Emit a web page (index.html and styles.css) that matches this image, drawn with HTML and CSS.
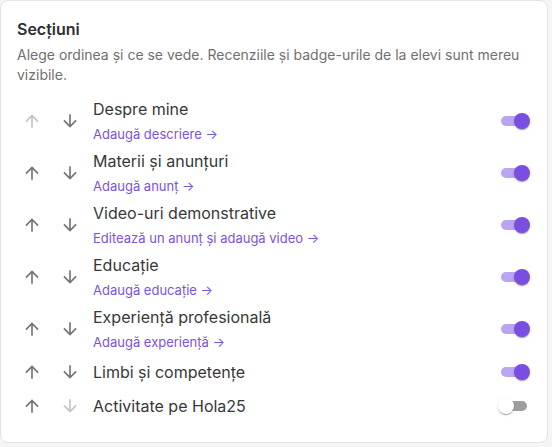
FILE: index.html
```html
<!DOCTYPE html>
<html lang="ro">
<head>
<meta charset="utf-8">
<title>Secțiuni</title>
<link rel="stylesheet" href="styles.css">
</head>
<body>
<div class="card">
  <h2 class="card-title">Secțiuni</h2>
  <p class="card-desc">Alege ordinea și ce se vede. Recenziile și badge-urile de la elevi sunt mereu vizibile.</p>

  <ul class="sections">
    <li class="section">
      <div class="moves">
        <button class="move" disabled><svg viewBox="0 0 24 24"><path d="M4 12l1.41 1.41L11 7.83V20h2V7.83l5.58 5.59L20 12l-8-8-8 8z"/></svg></button>
        <button class="move"><svg viewBox="0 0 24 24"><path d="M20 12l-1.41-1.41L13 16.17V4h-2v12.17l-5.58-5.59L4 12l8 8 8-8z"/></svg></button>
      </div>
      <div class="section-text">
        <div class="section-name">Despre mine</div>
        <a class="section-link" href="#">Adaugă descriere →</a>
      </div>
      <span class="switch on"><span class="track"></span><span class="thumb"></span></span>
    </li>
    <li class="section">
      <div class="moves">
        <button class="move"><svg viewBox="0 0 24 24"><path d="M4 12l1.41 1.41L11 7.83V20h2V7.83l5.58 5.59L20 12l-8-8-8 8z"/></svg></button>
        <button class="move"><svg viewBox="0 0 24 24"><path d="M20 12l-1.41-1.41L13 16.17V4h-2v12.17l-5.58-5.59L4 12l8 8 8-8z"/></svg></button>
      </div>
      <div class="section-text">
        <div class="section-name">Materii și anunțuri</div>
        <a class="section-link" href="#">Adaugă anunț →</a>
      </div>
      <span class="switch on"><span class="track"></span><span class="thumb"></span></span>
    </li>
    <li class="section">
      <div class="moves">
        <button class="move"><svg viewBox="0 0 24 24"><path d="M4 12l1.41 1.41L11 7.83V20h2V7.83l5.58 5.59L20 12l-8-8-8 8z"/></svg></button>
        <button class="move"><svg viewBox="0 0 24 24"><path d="M20 12l-1.41-1.41L13 16.17V4h-2v12.17l-5.58-5.59L4 12l8 8 8-8z"/></svg></button>
      </div>
      <div class="section-text">
        <div class="section-name">Video-uri demonstrative</div>
        <a class="section-link" href="#">Editează un anunț și adaugă video →</a>
      </div>
      <span class="switch on"><span class="track"></span><span class="thumb"></span></span>
    </li>
    <li class="section">
      <div class="moves">
        <button class="move"><svg viewBox="0 0 24 24"><path d="M4 12l1.41 1.41L11 7.83V20h2V7.83l5.58 5.59L20 12l-8-8-8 8z"/></svg></button>
        <button class="move"><svg viewBox="0 0 24 24"><path d="M20 12l-1.41-1.41L13 16.17V4h-2v12.17l-5.58-5.59L4 12l8 8 8-8z"/></svg></button>
      </div>
      <div class="section-text">
        <div class="section-name">Educație</div>
        <a class="section-link" href="#">Adaugă educație →</a>
      </div>
      <span class="switch on"><span class="track"></span><span class="thumb"></span></span>
    </li>
    <li class="section">
      <div class="moves">
        <button class="move"><svg viewBox="0 0 24 24"><path d="M4 12l1.41 1.41L11 7.83V20h2V7.83l5.58 5.59L20 12l-8-8-8 8z"/></svg></button>
        <button class="move"><svg viewBox="0 0 24 24"><path d="M20 12l-1.41-1.41L13 16.17V4h-2v12.17l-5.58-5.59L4 12l8 8 8-8z"/></svg></button>
      </div>
      <div class="section-text">
        <div class="section-name">Experiență profesională</div>
        <a class="section-link" href="#">Adaugă experiență →</a>
      </div>
      <span class="switch on"><span class="track"></span><span class="thumb"></span></span>
    </li>
    <li class="section">
      <div class="moves">
        <button class="move"><svg viewBox="0 0 24 24"><path d="M4 12l1.41 1.41L11 7.83V20h2V7.83l5.58 5.59L20 12l-8-8-8 8z"/></svg></button>
        <button class="move"><svg viewBox="0 0 24 24"><path d="M20 12l-1.41-1.41L13 16.17V4h-2v12.17l-5.58-5.59L4 12l8 8 8-8z"/></svg></button>
      </div>
      <div class="section-text">
        <div class="section-name">Limbi și competențe</div>
      </div>
      <span class="switch on"><span class="track"></span><span class="thumb"></span></span>
    </li>
    <li class="section">
      <div class="moves">
        <button class="move"><svg viewBox="0 0 24 24"><path d="M4 12l1.41 1.41L11 7.83V20h2V7.83l5.58 5.59L20 12l-8-8-8 8z"/></svg></button>
        <button class="move" disabled><svg viewBox="0 0 24 24"><path d="M20 12l-1.41-1.41L13 16.17V4h-2v12.17l-5.58-5.59L4 12l8 8 8-8z"/></svg></button>
      </div>
      <div class="section-text">
        <div class="section-name">Activitate pe Hola25</div>
      </div>
      <span class="switch"><span class="track"></span><span class="thumb"></span></span>
    </li>
  </ul>
</div>
</body>
</html>
```

FILE: styles.css
```css
/* Sections settings card */

body
{ margin: 0;
padding: 1px;
background-color: #f5f5f5;
font-family: Inter, "Noto Sans", sans-serif;
}

div.card
{ width: 548px;
height: 443px;
box-sizing: border-box;
background-color: #fff;
border: 1px solid #e4e4e7;
border-radius: 8px;
padding: 16px 13px 16px 16px;
margin: -1px 0 0 -1px;
}

h2.card-title
{ margin: 0 0 4px 0;
font-size: 16px;
line-height: 24px;
font-weight: 600;
color: #2e2e33;
}

p.card-desc
{ margin: 0 3px 10px 0;
font-size: 14px;
line-height: 20px;
color: #707070;
}

ul.sections
{ list-style: none;
margin: 0;
padding: 0;
}

li.section
{ display: flex;
align-items: center;
gap: 8px;
padding: 2px 0;
}

div.moves
{ display: flex;
gap: 8px;
}

button.move
{ width: 30px;
height: 30px;
padding: 5px;
border: 0;
background: none;
display: flex;
align-items: center;
justify-content: center;
color: #757575;
}

button.move svg
{ width: 20px;
height: 20px;
fill: currentColor;
}

button.move[disabled]
{ color: #c4c4c4;
}

div.section-text
{ flex: 1;
min-width: 0;
}

div.section-name
{ font-size: 16px;
line-height: 24px;
color: #383838;
}

a.section-link
{ display: block;
margin-top: 2px;
font-size: 13px;
line-height: 22px;
color: #7d53d8;
text-decoration: none;
}

/* small switch */

span.switch
{ position: relative;
width: 40px;
height: 24px;
flex: none;
}

span.track
{ position: absolute;
left: 7px; top: 7px;
width: 26px;
height: 10px;
border-radius: 5px;
background-color: #9e9e9e;
}

span.thumb
{ position: absolute;
left: 4px; top: 4px;
width: 16px;
height: 16px;
border-radius: 50%;
background-color: #fff;
box-shadow: 0 2px 1px -1px rgba(0,0,0,0.2), 0 1px 1px 0 rgba(0,0,0,0.14), 0 1px 3px 0 rgba(0,0,0,0.12);
}

span.switch.on span.track
{ background-color: #bba4f0;
}

span.switch.on span.thumb
{ left: 20px;
background-color: #7a4ee0;
}
```
